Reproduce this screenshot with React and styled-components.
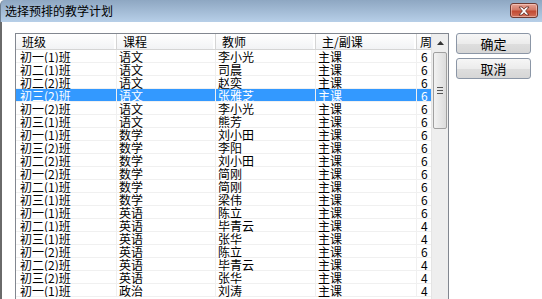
import React from 'react';
import styled, { createGlobalStyle } from 'styled-components';

const GlobalStyle = createGlobalStyle`
    html, body {
        margin: 0;
        padding: 0;
        background: #ffffff;
        overflow: hidden;
    }
    body {
        font-family: "Noto Sans CJK SC", "DejaVu Sans", sans-serif;
        font-size: 12px;
        color: #000;
    }
`;

const columns = [
    { title: '班级', width: 101 },
    { title: '课程', width: 99 },
    { title: '教师', width: 100 },
    { title: '主/副课', width: 101 },
    { title: '周', width: 14 },
];

const rows = [
    ['初一(1)班', '语文', '李小光', '主课', '6'],
    ['初二(1)班', '语文', '司晨', '主课', '6'],
    ['初二(2)班', '语文', '赵奕', '主课', '6'],
    ['初三(2)班', '语文', '张雅芝', '主课', '6'],
    ['初一(2)班', '语文', '李小光', '主课', '6'],
    ['初三(1)班', '语文', '熊芳', '主课', '6'],
    ['初一(1)班', '数学', '刘小田', '主课', '6'],
    ['初三(2)班', '数学', '李阳', '主课', '6'],
    ['初二(2)班', '数学', '刘小田', '主课', '6'],
    ['初一(2)班', '数学', '简刚', '主课', '6'],
    ['初二(1)班', '数学', '简刚', '主课', '6'],
    ['初三(1)班', '数学', '梁伟', '主课', '6'],
    ['初一(1)班', '英语', '陈立', '主课', '6'],
    ['初二(1)班', '英语', '毕青云', '主课', '4'],
    ['初三(1)班', '英语', '张华', '主课', '4'],
    ['初一(2)班', '英语', '陈立', '主课', '6'],
    ['初二(2)班', '英语', '毕青云', '主课', '4'],
    ['初三(2)班', '英语', '张华', '主课', '4'],
    ['初一(1)班', '政治', '刘涛', '主课', '4'],
];

const gridCols = columns.map((c) => `${c.width}px`).join(' ');

const App = () => {
    const selected = 3;

    return (
        <>
            <GlobalStyle />
            <Window>
                <TitleBar>
                    <Title>选择预排的教学计划</Title>
                    <CloseButton>
                        <svg width="14" height="10" viewBox="0 0 14 10">
                            <path
                                d="M2 1 L5 1 L7 3.2 L9 1 L12 1 L8.6 5 L12 9 L9 9 L7 6.8 L5 9 L2 9 L5.4 5 Z"
                                fill="#ffffff"
                                stroke="#5a2a24"
                                strokeWidth="0.8"
                            />
                        </svg>
                    </CloseButton>
                </TitleBar>
                <Body>
                    <ListView>
                        <ListContent>
                            <HeaderRow>
                                {columns.map((c) => (
                                    <HeaderCell key={c.title}>{c.title}</HeaderCell>
                                ))}
                            </HeaderRow>
                            {rows.map((r, i) => (
                                <Row key={i} $selected={i === selected}>
                                    {r.map((v, j) => (
                                        <Cell key={j} $first={j === 0}>
                                            {v}
                                        </Cell>
                                    ))}
                                </Row>
                            ))}
                        </ListContent>
                        <ScrollBar>
                            <ArrowButton>
                                <svg width="7" height="4" viewBox="0 0 7 4">
                                    <path d="M0 4 L3.5 0 L7 4 Z" fill="#333" />
                                </svg>
                            </ArrowButton>
                            <Thumb>
                                <Grip />
                                <Grip />
                                <Grip />
                            </Thumb>
                        </ScrollBar>
                    </ListView>
                    <Buttons>
                        <Button>确定</Button>
                        <Button>取消</Button>
                    </Buttons>
                </Body>
            </Window>
        </>
    );
};

export default App;

const Window = styled.div`
    width: 542px;
    height: 299px;
    display: flex;
    flex-direction: column;
    overflow: hidden;
`;

const TitleBar = styled.div`
    height: 22px;
    flex: none;
    display: flex;
    align-items: center;
    justify-content: space-between;
    padding: 0 4px 0 4px;
    box-sizing: border-box;
    background: linear-gradient(#8ea7c2, #b7cfe8);
    border-left: 1px solid #6f8093;
    border-top-left-radius: 5px;
`;

const Title = styled.div`
    font-size: 12px;
    line-height: 22px;
    color: #000;
`;

const CloseButton = styled.div`
    width: 28px;
    height: 15px;
    margin-top: -1px;
    display: flex;
    align-items: center;
    justify-content: center;
    box-sizing: border-box;
    border: 1px solid #6e3a33;
    border-radius: 3px;
    background: linear-gradient(#e6a496 0%, #d27a68 45%, #c24a32 55%, #d0705a 100%);
    box-shadow: inset 0 0 0 1px rgba(255, 220, 210, 0.5);
`;

const Body = styled.div`
    flex: 1;
    display: flex;
    align-items: flex-start;
    padding: 11px 0 0 15px;
    border-left: 2px solid #6a6a6a;
    box-sizing: border-box;
    background: #fff;
    min-height: 0;
`;

const ListView = styled.div`
    display: flex;
    border: 1px solid #828790;
    border-bottom: none;
    margin-left: -2px;
    height: 300px;
    box-sizing: border-box;
`;

const ListContent = styled.div`
    display: flex;
    flex-direction: column;
`;

const HeaderRow = styled.div`
    display: grid;
    grid-template-columns: ${gridCols};
    height: 16px;
    background: linear-gradient(#ffffff, #f2f3f5);
    border-bottom: 1px solid #d5d5d5;
    box-sizing: border-box;
`;

const HeaderCell = styled.div`
    padding-left: 6px;
    line-height: 15px;
    white-space: nowrap;
    overflow: hidden;
    border-right: 1px solid #d5d5d5;
    box-shadow: inset -2px 0 0 #ffffff;
    box-sizing: border-box;
    &:last-child {
        padding-left: 3px;
        border-right: none;
        box-shadow: none;
    }
`;

const Row = styled.div`
    display: grid;
    grid-template-columns: ${gridCols};
    height: 13px;
    background: ${(p) => (p.$selected ? '#3399ff' : '#ffffff')};
    color: ${(p) => (p.$selected ? '#ffffff' : '#000000')};
`;

const Cell = styled.div`
    padding-left: ${(p) => (p.$first ? '4px' : '2px')};
    height: 13px;
    line-height: 13px;
    font-size: 12px;
    white-space: nowrap;
    overflow: hidden;
    box-shadow: inset -1px -1px 0 #f0f0f0;
    box-sizing: border-box;
    &:last-child {
        padding-left: 4px;
        box-shadow: inset 0 -1px 0 #f0f0f0;
    }
`;

const ScrollBar = styled.div`
    width: 17px;
    display: flex;
    flex-direction: column;
    align-items: center;
    background: #eeeeee;
    border-left: 1px solid #e4e4e4;
    box-sizing: border-box;
`;

const ArrowButton = styled.div`
    height: 17px;
    width: 100%;
    display: flex;
    align-items: center;
    justify-content: center;
`;

const Thumb = styled.div`
    width: 14px;
    height: 77px;
    margin-top: 1px;
    box-sizing: border-box;
    border: 1px solid #a0a0a0;
    border-radius: 2px;
    background: linear-gradient(90deg, #f2f2f2, #dcdcdc);
    display: flex;
    flex-direction: column;
    align-items: center;
    justify-content: center;
    gap: 2px;
`;

const Grip = styled.div`
    width: 6px;
    height: 1px;
    background: #555;
`;

const Buttons = styled.div`
    display: flex;
    flex-direction: column;
    gap: 4px;
    margin-left: 7px;
`;

const Button = styled.div`
    width: 75px;
    height: 21px;
    box-sizing: border-box;
    border: 1px solid #8b96a6;
    border-radius: 3px;
    background: linear-gradient(#f6f6f6 0%, #ececec 50%, #dedede 52%, #d6d6d6 100%);
    display: flex;
    align-items: center;
    justify-content: center;
    font-size: 13px;
`;
